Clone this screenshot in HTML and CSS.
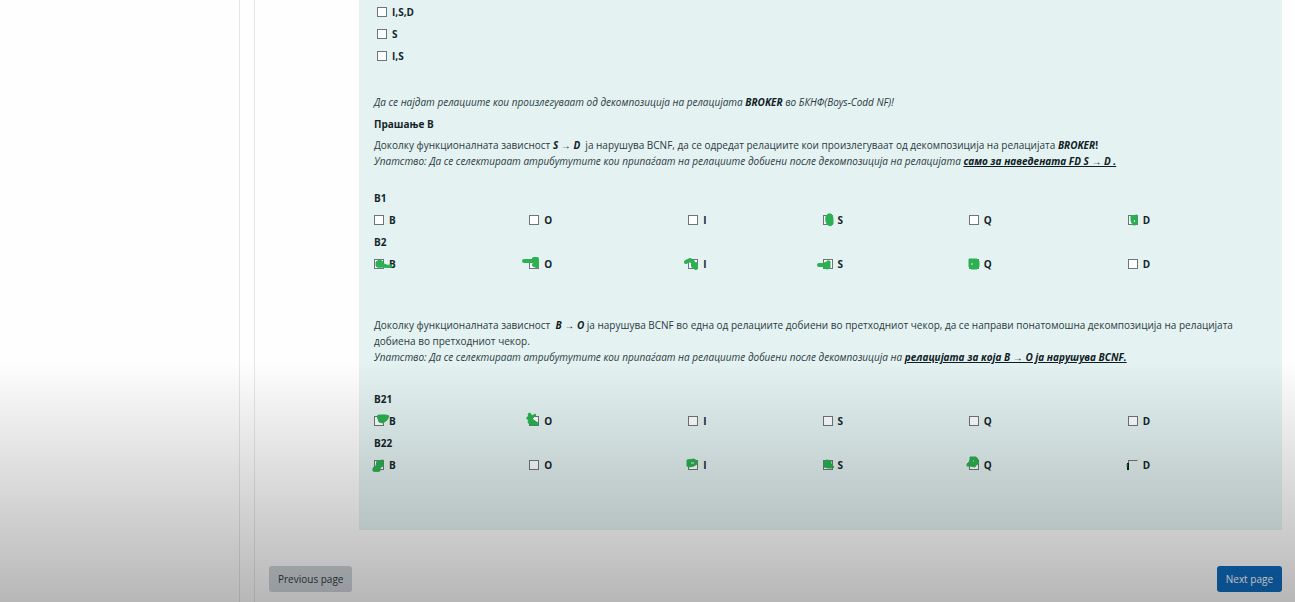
FILE: index.html
```html
<!DOCTYPE html>
<html lang="mk">
<head>
<meta charset="utf-8">
<title>Прашање B</title>
<link rel="stylesheet" href="styles.css">
</head>
<body>
<div class="layout">
  <aside class="sidebar"></aside>
  <main class="main">
    <form class="quiz">
      <section class="question">
        <div class="options">
          <label class="choice"><input type="checkbox" class="box">I,S,D</label>
          <label class="choice"><input type="checkbox" class="box">S</label>
          <label class="choice"><input type="checkbox" class="box">I,S</label>
        </div>

        <p class="text intro"><em>Да се најдат релациите кои произлегуваат од декомпозиција на релацијата <strong>BROKER</strong> во БКНФ(Boys-Codd NF)!</em></p>
        <h2 class="title">Прашање B</h2>
        <p class="text">Доколку функционалната зависност <strong><em>S → D</em></strong>&nbsp; ја нарушува BCNF, да се одредат релациите кои произлегуваат од декомпозиција на релацијата <strong><em>BROKER</em>!</strong><br>
        <em>Упатство: Да се селектираат атрибутутите кои припаѓаат на релациите добиени после декомпозиција на релацијата <strong><u>само за наведената FD S → D .</u></strong></em></p>

        <div class="group">
          <fieldset class="relation">
            <legend class="title">B1</legend>
            <div class="row">
              <label class="choice"><input type="checkbox" class="box">B</label>
              <label class="choice"><input type="checkbox" class="box">O</label>
              <label class="choice"><input type="checkbox" class="box">I</label>
              <label class="choice"><input type="checkbox" class="box">S<svg class="mark" viewBox="0 0 10 10"><path class="fill" d="M3 1Q5-2 8-1Q10 0 10 4V9Q8 12 5 10Q2 8 3 1Z"/></svg></label>
              <label class="choice"><input type="checkbox" class="box">Q</label>
              <label class="choice"><input type="checkbox" class="box">D<svg class="mark" viewBox="0 0 10 10"><path class="fill" d="M3 1L9 0V9Q8 10 5 10Q4 8 3 6Z"/><path class="glint" d="M6.500 5V7"/></svg></label>
            </div>
          </fieldset>
          <fieldset class="relation">
            <legend class="title">B2</legend>
            <div class="row">
              <label class="choice"><input type="checkbox" class="box">B<svg class="mark" viewBox="0 0 10 10"><path class="fill" d="M2 3Q5 0 8 2L10 5Q13 7 17 6L18 8Q14 9 9 8Q3 9 2 7Z"/></svg></label>
              <label class="choice"><input type="checkbox" class="box">O<svg class="mark" viewBox="0 0 10 10"><path class="stroke" d="M-5 2H4L5 0H8L8 3L8 7L5 6L6 3"/></svg></label>
              <label class="choice"><input type="checkbox" class="box">I<svg class="mark" viewBox="0 0 10 10"><path class="stroke" d="M-2 3L2 1L5 3V7L8 9L8 5"/></svg></label>
              <label class="choice"><input type="checkbox" class="box">S<svg class="mark" viewBox="0 0 10 10"><path class="stroke" d="M-4 6H2"/><path class="fill" d="M1 4L4 3V2L7 2V9Q4 11 1 9Z"/></svg></label>
              <label class="choice"><input type="checkbox" class="box">Q<svg class="mark" viewBox="0 0 10 10"><path class="fill" d="M0 0L8 0L10 2V8L8 10H2L0 8V1Z"/><path class="glint" d="M3 4V6"/></svg></label>
              <label class="choice"><input type="checkbox" class="box">D</label>
            </div>
          </fieldset>
        </div>

        <p class="text next-step">Доколку функционалната зависност &nbsp;<strong><em>B → O</em></strong> ја нарушува BCNF во една од релациите добиени во претходниот чекор, да се направи понатомошна декомпозиција на релацијата добиена во претходниот чекор.<br>
        <em>Упатство: Да се селектираат атрибутутите кои припаѓаат на релациите добиени после декомпозиција на <strong><u>релацијата за која B → O ја нарушува BCNF.</u></strong></em></p>

        <div class="group">
          <fieldset class="relation">
            <legend class="title">B21</legend>
            <div class="row">
              <label class="choice"><input type="checkbox" class="box">B<svg class="mark" viewBox="0 0 10 10"><path class="fill" d="M3 0L5-1H12L15 0L13 4L9 7L5 6Z"/></svg></label>
              <label class="choice"><input type="checkbox" class="box">O<svg class="mark" viewBox="0 0 10 10"><path class="fill" d="M-1-2L1-3L3 0L6-2L7-1L3 3L9 7V9H1L-1 6L0 4L-2 3V1H0Z"/></svg></label>
              <label class="choice"><input type="checkbox" class="box">I</label>
              <label class="choice"><input type="checkbox" class="box">S</label>
              <label class="choice"><input type="checkbox" class="box">Q</label>
              <label class="choice"><input type="checkbox" class="box">D</label>
            </div>
          </fieldset>
          <fieldset class="relation">
            <legend class="title">B22</legend>
            <div class="row">
              <label class="choice"><input type="checkbox" class="box">B<svg class="mark" viewBox="0 0 10 10"><path class="fill" d="M3 1L9 0V6L6 8V11Q2 12-1 11L-1 8L2 6Z"/></svg></label>
              <label class="choice"><input type="checkbox" class="box">O</label>
              <label class="choice"><input type="checkbox" class="box">I<svg class="mark" viewBox="0 0 10 10"><path class="fill" d="M-1 0L6-1L9 1V4L6 6L1 7L-1 6Z"/><path class="glint" d="M3 3H6"/></svg></label>
              <label class="choice"><input type="checkbox" class="box">S<svg class="mark" viewBox="0 0 10 10"><path class="fill" d="M1 1L4 0L8 1V4L11 7L10 8L5 8L1 7Z"/></svg></label>
              <label class="choice"><input type="checkbox" class="box">Q<svg class="mark" viewBox="0 0 10 10"><path class="fill" d="M1-3H7L9-1V4L7 5L6 7L1 6L-2 6L-2 4L1 1Z"/><path class="glint" d="M4 1H5"/></svg></label>
              <label class="choice"><input type="checkbox" class="box box-worn">D<svg class="mark" viewBox="0 0 10 10"><path class="ink" d="M0 3V10"/><path class="fill" d="M-1 4V7"/></svg></label>
            </div>
          </fieldset>
        </div>
      </section>

      <div class="actions">
        <button type="button" class="btn btn-secondary">Previous page</button>
        <button type="button" class="btn btn-primary">Next page</button>
      </div>
    </form>
  </main>
</div>
</body>
</html>
```
FILE: styles.css
```css
* {
  box-sizing: border-box;
}

body {
  margin: 0;
  background: #fefefe;
  color: #2b3a3e;
  font-family: "Open Sans", "Noto Sans", sans-serif;
  font-size: 10px;
  font-feature-settings: "locl" 0;
  line-height: 16px;
}

/* shade that darkens the lower part of the window */
body::after {
  content: "";
  position: fixed;
  inset: 60% 0 0;
  background: linear-gradient(rgba(0, 0, 0, 0), rgba(0, 0, 0, 0.28));
  pointer-events: none;
}

.layout {
  display: flex;
  gap: 14px;
  min-height: 100vh;
}

.sidebar {
  flex: 0 0 240px;
  border-right: 1px solid #e9e4e5;
}

.main {
  flex: 1;
  min-width: 0;
  padding: 0 13px 10px 14px;
  border-left: 1px solid #ece4e5;
}

.question {
  margin-left: 90px;
  padding: 4px 12px 57px 15px;
  background: #e4f2f2;
}

.options {
  display: flex;
  flex-direction: column;
  align-items: flex-start;
  gap: 6px;
  padding-left: 3px;
}

.text {
  margin: 5px 0 0;
}

.intro {
  margin-top: 30px;
}

.next-step {
  margin-top: 45px;
}

.title {
  margin: 6px 0 0;
  padding: 0;
  color: #14262b;
  font-size: 10px;
  font-weight: 700;
}

strong {
  color: #0f2024;
}

.group {
  display: flex;
  flex-direction: column;
  gap: 6px;
  margin-top: 21px;
}

.next-step + .group {
  margin-top: 26px;
}

.relation {
  min-width: 0;
  margin: 0;
  padding: 0;
  border: 0;
}

.relation .title {
  margin: 0;
}

.row {
  display: grid;
  grid-template-columns: 155fr 159fr 134fr 146fr 159fr 142fr;
  padding-top: 6px;
}

.choice {
  position: relative;
  display: flex;
  align-items: center;
  justify-self: start;
  gap: 5px;
  color: #14262b;
  font-weight: 700;
}

.box {
  appearance: none;
  width: 10px;
  height: 10px;
  margin: 0;
  border: 1px solid #6c7678;
  background: #fff;
}

.box:checked {
  background: #0f6cbf;
}

.box-worn {
  border-color: #6c7678 transparent transparent #6c7678;
  background: transparent;
}

/* hand-drawn marks laid over the tick boxes */
.mark {
  position: absolute;
  top: 3px;
  left: 0;
  width: 10px;
  height: 10px;
  overflow: visible;
  pointer-events: none;
}

.fill {
  fill: #2bb052;
  stroke: #2bb052;
  stroke-linejoin: round;
}

.stroke {
  fill: none;
  stroke: #2bb052;
  stroke-width: 4;
  stroke-linecap: round;
  stroke-linejoin: round;
}

.glint {
  fill: none;
  stroke: #dff5e4;
}

.ink {
  stroke: #0c1a10;
  stroke-width: 2;
}

.actions {
  display: flex;
  justify-content: space-between;
  margin-top: 36px;
}

.btn {
  padding: 4px 9px;
  border: 0;
  border-radius: 3px;
  font: inherit;
  line-height: 18px;
}

.btn-secondary {
  background: #ced4da;
  color: #343a40;
}

.btn-primary {
  background: #0f6cbf;
  color: #fff;
}
```
